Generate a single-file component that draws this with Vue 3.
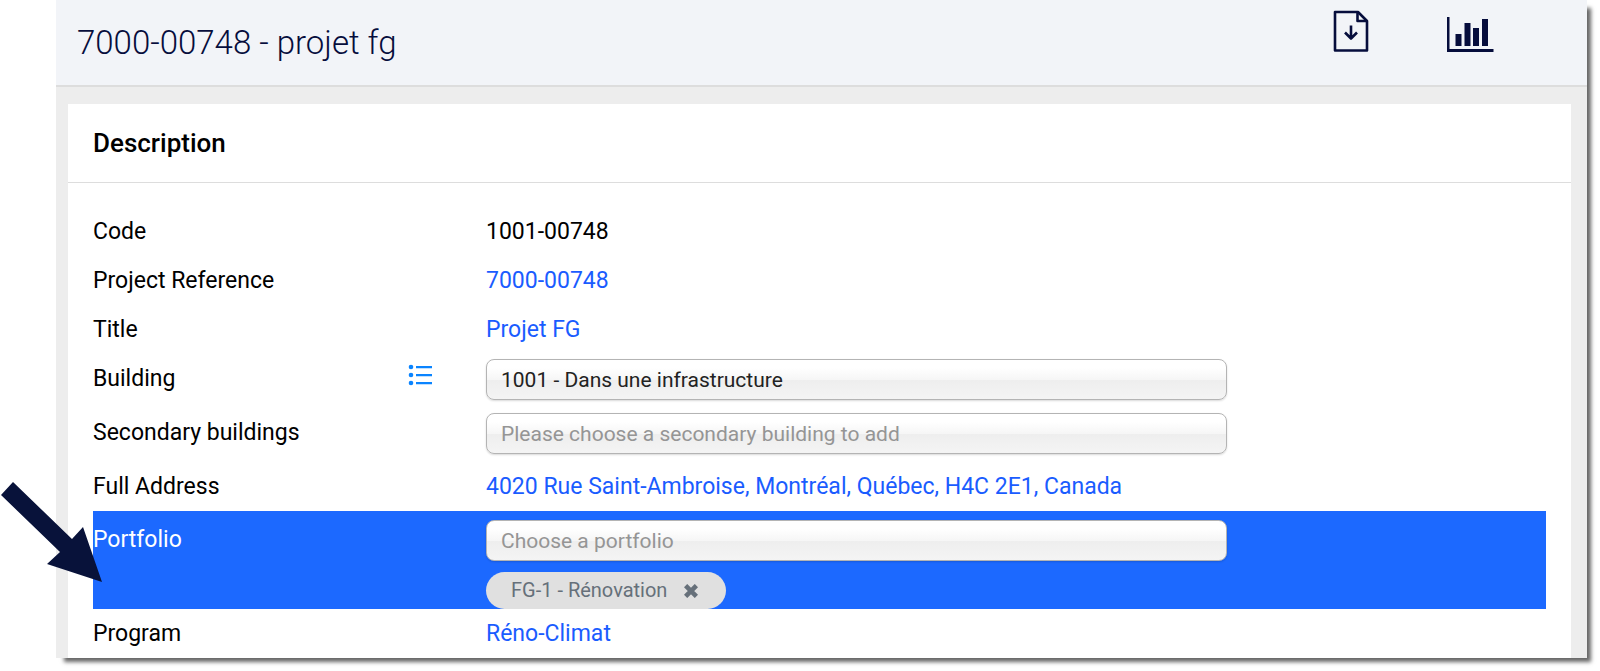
<template>
  <main class="panel">
    <header class="topbar">
      <h1>7000-00748 - projet fg</h1>
      <div class="actions">
        <button type="button" aria-label="Download">
          <svg width="36" height="44" viewBox="0 0 36 44" fill="none" stroke="#060d3c" stroke-width="2.6" stroke-linejoin="round">
            <path d="M2 2H25L34 11V40.5H2Z" />
            <path d="M24.5 2V11H34" />
            <path d="M18 15.5V28M12 22.5L18 28.5L24 22.5" />
          </svg>
        </button>
        <button type="button" aria-label="Statistics">
          <svg width="48" height="44" viewBox="0 0 48 44" fill="#060d3c">
            <path d="M0 7H2.5V39H46.5V42H0Z" />
            <path d="M8.5 24H14.5V36H8.5ZM17.5 13H23.5V36H17.5ZM26 18H32V36H26ZM35 9H41V36H35Z" />
          </svg>
        </button>
      </div>
    </header>

    <section class="card">
      <h2>Description</h2>
      <div class="rows">
        <div
          v-for="row in rows"
          :key="row.label"
          class="row"
          :class="{ 'has-field': row.field, highlighted: row.tag }"
        >
          <div class="label">
            <label v-if="row.field" :for="row.field">{{ row.label }}</label>
            <span v-else>{{ row.label }}</span>
            <button v-if="row.list" type="button" class="list-btn" aria-label="List">
              <svg width="24" height="22" viewBox="0 0 24 22" fill="#0a84ff">
                <circle cx="3" cy="3" r="2.3" />
                <circle cx="3" cy="11" r="2.3" />
                <circle cx="3" cy="19" r="2.3" />
                <path d="M8 2H24V4.2H8ZM8 10H24V12.2H8ZM8 18H24V20.2H8Z" />
              </svg>
            </button>
          </div>
          <div class="value">
            <input
              v-if="row.field"
              :id="row.field"
              v-model="row.value"
              type="text"
              :placeholder="row.placeholder"
            >
            <a v-else-if="row.link" href="#">{{ row.value }}</a>
            <span v-else>{{ row.value }}</span>
            <div v-if="row.tag" class="tag">
              <span>{{ row.tag }}</span>
              <button type="button" aria-label="Remove">
                <svg width="14" height="14" viewBox="0 0 14 14" stroke="#66707a" stroke-width="4.6">
                  <path d="M1.6 1.6L12.4 12.4M12.4 1.6L1.6 12.4" />
                </svg>
              </button>
            </div>
          </div>
          <!-- pointer laid over the highlighted row -->
          <svg v-if="row.tag" class="pointer" width="102" height="100" viewBox="0 0 102 100">
            <path d="M13 0L72 57L83 45L102 100L47 82L60 70L1 13Z" fill="#08123a" />
          </svg>
        </div>
      </div>
    </section>
  </main>
</template>

<script setup>
import { ref } from 'vue'

const rows = ref([
  { label: 'Code', value: '1001-00748' },
  { label: 'Project Reference', value: '7000-00748', link: true },
  { label: 'Title', value: 'Projet FG', link: true },
  { label: 'Building', field: 'building', value: '1001 - Dans une infrastructure', list: true },
  { label: 'Secondary buildings', field: 'secondary', value: '', placeholder: 'Please choose a secondary building to add' },
  { label: 'Full Address', value: '4020 Rue Saint-Ambroise, Montréal, Québec, H4C 2E1, Canada', link: true },
  { label: 'Portfolio', field: 'portfolio', value: '', placeholder: 'Choose a portfolio', tag: 'FG-1 - Rénovation' },
  { label: 'Program', value: 'Réno-Climat', link: true }
])
</script>

<style>
body {
  background: #ffffff;
}
</style>

<style scoped>
* {
  box-sizing: border-box;
}

.panel {
  margin: 0 13px 12px 56px;
  background: #ededed;
  box-shadow: 6px 6px 4px -2px rgba(0, 0, 0, 0.6);
  font-family: Roboto, "Liberation Sans", sans-serif;
  font-size: 23px;
  color: #000000;
}

button {
  display: flex;
  padding: 0;
  border: 0;
  background: none;
  cursor: pointer;
}

.topbar {
  display: flex;
  justify-content: space-between;
  height: 87px;
  padding: 0 92px 0 21px;
  border-bottom: 2px solid #dddddd;
  background: #f2f4f8;
}

.topbar h1 {
  margin: 0;
  font-size: 33px;
  font-weight: 350;
  line-height: 86px;
  color: #060d3c;
}

.actions {
  display: flex;
  align-items: flex-start;
  gap: 78px;
  padding-top: 10px;
}

.card {
  margin: 17px 16px 0 12px;
  background: #ffffff;
}

.card h2 {
  margin: 0;
  padding: 0 25px;
  border-bottom: 1px solid #dddddd;
  font-size: 26px;
  font-weight: 500;
  line-height: 78px;
}

.rows {
  padding: 24px 25px 0;
}

.row {
  position: relative;
  display: grid;
  grid-template-columns: 393px 51%;
  line-height: 49px;
}

.row.has-field {
  padding-bottom: 5px;
}

.label {
  display: flex;
  align-items: flex-start;
  justify-content: space-between;
  padding-right: 54px;
}

.list-btn {
  margin-top: 10px;
}

.value a {
  color: #1a5cff;
  text-decoration: none;
}

input {
  display: block;
  width: 100%;
  height: 41px;
  margin-top: 5px;
  padding: 0 14px;
  border: 1px solid #b4b4b4;
  border-radius: 8px;
  background: linear-gradient(#ffffff 20%, #f6f6f6 50%, #eeeeee 52%, #f4f4f4 100%);
  box-shadow: 0 1px 2px rgba(0, 0, 0, 0.15);
  font-family: inherit;
  font-size: 21px;
  color: #222222;
}

input::placeholder {
  color: #959595;
  opacity: 1;
}

.highlighted {
  background: #1c69ff;
  color: #ffffff;
}

.row.highlighted {
  padding: 4px 0 0;
}

.tag {
  display: flex;
  align-items: center;
  gap: 17px;
  width: fit-content;
  height: 37px;
  margin-top: 11px;
  padding: 0 28px 0 25px;
  border-radius: 19px;
  background: #e0e0e0;
  font-size: 20px;
  line-height: 37px;
  color: #66707a;
}

.pointer {
  position: absolute;
  top: -29px;
  left: -93px;
}
</style>
